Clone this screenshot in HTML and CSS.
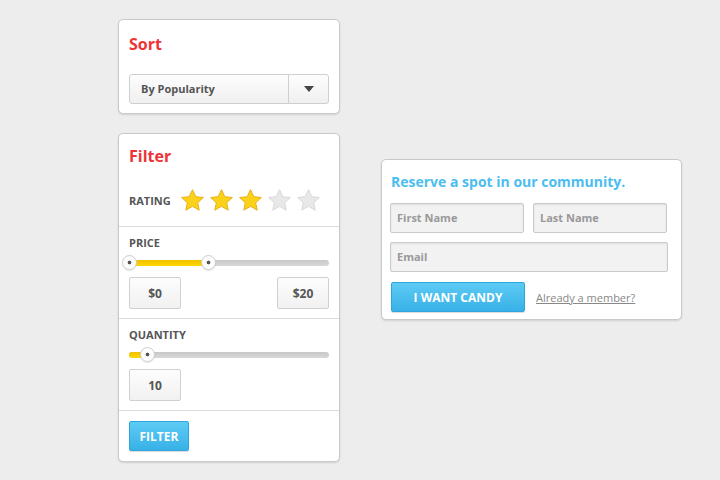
FILE: index.html
```html
<!DOCTYPE html>
<html>
<head>
<meta charset="utf-8">
<link rel="stylesheet" href="styles.css">
</head>
<body>
<div class="page">
  <div class="left-col">
    <div class="card sort-card">
      <h2 class="card-title">Sort</h2>
      <div class="select">
        <span class="select-value">By Popularity</span>
        <span class="select-btn"><span class="caret"></span></span>
      </div>
    </div>

    <div class="card filter-card">
      <div class="section head-section">
        <h2 class="card-title">Filter</h2>
        <div class="rating">
          <span class="label">RATING</span>
          <div class="stars">
            <svg class="star on" viewBox="0 0 26 25"><path d="M13 1.2l3.4 7.3 7.9.9-5.9 5.4 1.6 7.8L13 18.6l-7 4 1.6-7.8-5.9-5.4 7.9-.9z"/></svg>
            <svg class="star on" viewBox="0 0 26 25"><path d="M13 1.2l3.4 7.3 7.9.9-5.9 5.4 1.6 7.8L13 18.6l-7 4 1.6-7.8-5.9-5.4 7.9-.9z"/></svg>
            <svg class="star on" viewBox="0 0 26 25"><path d="M13 1.2l3.4 7.3 7.9.9-5.9 5.4 1.6 7.8L13 18.6l-7 4 1.6-7.8-5.9-5.4 7.9-.9z"/></svg>
            <svg class="star off" viewBox="0 0 26 25"><path d="M13 1.2l3.4 7.3 7.9.9-5.9 5.4 1.6 7.8L13 18.6l-7 4 1.6-7.8-5.9-5.4 7.9-.9z"/></svg>
            <svg class="star off" viewBox="0 0 26 25"><path d="M13 1.2l3.4 7.3 7.9.9-5.9 5.4 1.6 7.8L13 18.6l-7 4 1.6-7.8-5.9-5.4 7.9-.9z"/></svg>
          </div>
        </div>
      </div>

      <div class="section">
        <div class="label">PRICE</div>
        <div class="slider">
          <div class="track"></div>
          <div class="fill" style="left:0;width:79px"></div>
          <span class="knob" style="left:0"></span>
          <span class="knob" style="left:79px"></span>
        </div>
        <div class="values spread">
          <span class="value-box">$0</span>
          <span class="value-box">$20</span>
        </div>
      </div>

      <div class="section">
        <div class="label">QUANTITY</div>
        <div class="slider">
          <div class="track"></div>
          <div class="fill" style="left:0;width:18px"></div>
          <span class="knob" style="left:18px"></span>
        </div>
        <div class="values">
          <span class="value-box">10</span>
        </div>
      </div>

      <div class="section foot-section">
        <button class="btn btn-small">FILTER</button>
      </div>
    </div>
  </div>

  <div class="right-col">
    <div class="card signup-card">
      <h3 class="signup-title">Reserve a spot in our community.</h3>
      <div class="row">
        <div class="input half">First Name</div>
        <div class="input half">Last Name</div>
      </div>
      <div class="row">
        <div class="input full">Email</div>
      </div>
      <div class="row actions">
        <button class="btn btn-wide">I WANT CANDY</button>
        <a class="link" href="#">Already a member?</a>
      </div>
    </div>
  </div>
</div>
</body>
</html>
```

FILE: styles.css
```css
* { box-sizing: border-box; }
html, body { margin: 0; padding: 0; }
body {
  background: #ededed;
  font-family: "Open Sans", "Liberation Sans", sans-serif;
  color: #555;
  width: 720px;
  height: 480px;
  overflow: hidden;
}
.page {
  display: flex;
  align-items: flex-start;
  padding: 19px 0 0 118px;
  gap: 41px;
}
.left-col {
  display: flex;
  flex-direction: column;
  gap: 19px;
  width: 222px;
}
.card {
  background: #fff;
  border: 1px solid #c9c9c9;
  border-radius: 5px;
  box-shadow: 0 1px 2px rgba(0,0,0,0.12);
}
.card-title {
  margin: 0;
  font-size: 16px;
  line-height: 20px;
  font-weight: 700;
  color: #ee3337;
}
.sort-card {
  padding: 14px 10px 9px 10px;
  height: 95px;
}
.sort-card .card-title { margin-bottom: 20px; margin-left: 0; }
.select {
  display: flex;
  height: 30px;
  border: 1px solid #cfcfcf;
  border-radius: 3px;
  background: linear-gradient(#fdfdfd, #efefef);
}
.select-value {
  flex: 1;
  font-size: 11px;
  font-weight: 700;
  color: #555;
  line-height: 28px;
  padding-left: 11px;
}
.select-btn {
  width: 40px;
  border-left: 1px solid #cfcfcf;
  display: flex;
  align-items: center;
  justify-content: center;
}
.caret {
  width: 0; height: 0;
  border-left: 5px solid transparent;
  border-right: 5px solid transparent;
  border-top: 6px solid #444;
}
.filter-card { height: 329px; }
.section {
  padding: 9px 10px 9px 10px;
  border-top: 1px solid #dcdcdc;
}
.head-section {
  border-top: 0;
  padding: 12px 10px 0 10px;
  height: 92px;
}
.head-section .card-title { margin-bottom: 22px; }
.rating {
  display: flex;
  align-items: center;
  height: 25px;
}
.label {
  font-size: 11px;
  font-weight: 700;
  line-height: 14px;
  color: #555;
}
.rating .label { width: 51px; }
.stars { display: flex; gap: 4px; }
.star { width: 25px; height: 25px; display: block; }
.star.on path { fill: #fcd11a; stroke: #e3a80c; stroke-width: 0.9; }
.star.off path { fill: #e8e8e8; stroke: #d4d4d4; stroke-width: 0.9; }
.slider {
  position: relative;
  height: 14px;
  margin: 6px 0 7px 0;
}
.track {
  position: absolute;
  left: 0; right: 0; top: 4px;
  height: 6px;
  border-radius: 3px;
  background: linear-gradient(#c8c8c8, #d8d8d8);
}
.fill {
  position: absolute;
  top: 4px;
  height: 6px;
  border-radius: 3px;
  background: linear-gradient(#f0c000, #ffd800);
}
.knob {
  position: absolute;
  width: 15px; height: 15px;
  margin-left: -7px;
  top: -1px;
  border-radius: 50%;
  background: radial-gradient(circle, #555 0 1.6px, #fafafa 2.2px, #fff 60%, #eee 100%);
  border: 1px solid #cfcfcf;
  box-shadow: 0 1px 1px rgba(0,0,0,0.1);
}
.values { display: flex; }
.values.spread { justify-content: space-between; }
.value-box {
  width: 52px;
  height: 32px;
  border: 1px solid #d0d0d0;
  border-radius: 2px;
  background: linear-gradient(#fdfdfd, #f1f1f1);
  font-size: 12px;
  font-weight: 700;
  color: #555;
  display: flex;
  align-items: center;
  justify-content: center;
}
.foot-section { padding: 10px 10px 10px 10px; }
.btn {
  border: 1px solid #2ea5dc;
  border-radius: 2px;
  background: linear-gradient(#5dcbf4, #38b1e7);
  color: #fff;
  font-family: "Open Sans", "Liberation Sans", sans-serif;
  font-weight: 700;
  font-size: 12px;
  height: 30px;
  padding: 0;
  box-shadow: 0 1px 1px rgba(0,0,0,0.15);
  display: block;
}
.btn-small { width: 60px; }
.btn-wide { width: 134px; }
.right-col { padding-top: 140px; }
.signup-card {
  width: 301px;
  height: 161px;
  padding: 12px 13px 10px 8px;
}
.signup-title {
  margin: 0 0 11px 1px;
  font-size: 14px;
  line-height: 20px;
  font-weight: 700;
  color: #4cbdef;
}
.row { display: flex; gap: 9px; margin-bottom: 9px; }
.input {
  height: 30px;
  border: 1px solid #cacaca;
  border-radius: 2px;
  background: #f2f2f2;
  box-shadow: inset 0 1px 2px rgba(0,0,0,0.08);
  font-size: 11px;
  font-weight: 700;
  color: #999;
  line-height: 28px;
  padding-left: 6px;
}
.half { width: 134px; }
.full { width: 278px; }
.actions { margin-top: 10px; margin-bottom: 0; align-items: center; gap: 11px; padding-left: 1px; }
.link {
  color: #888;
  font-size: 11px;
  text-decoration: underline;
}
```
